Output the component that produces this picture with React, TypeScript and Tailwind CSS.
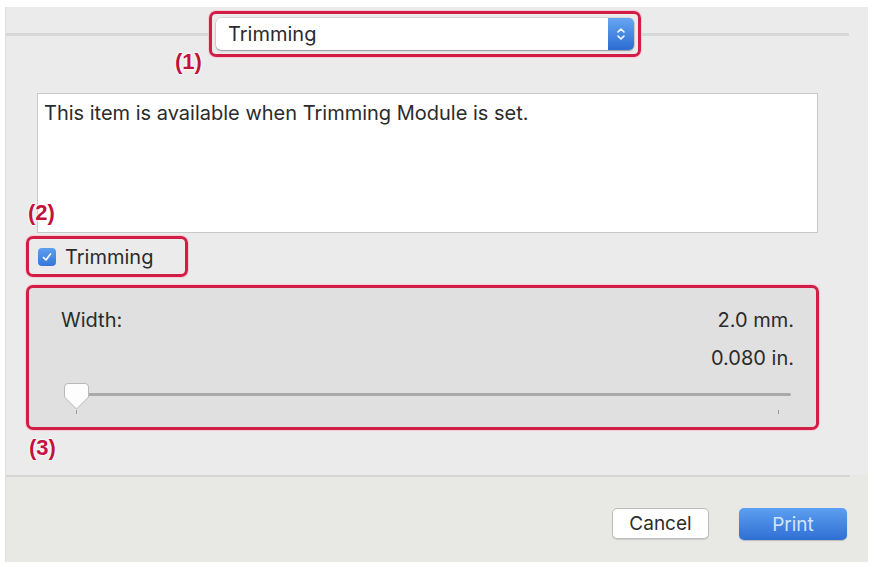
import React from "react";

const redFrame = "rounded-[7px] border-[3px] border-[#d21d47] shadow-[0_0_0_1px_rgba(255,190,205,0.7)]";
const tag =
  "absolute font-['Liberation_Sans',sans-serif] text-[22px] leading-[22px] font-bold text-[#c4113d] [text-shadow:0_0_2px_#fff,0_0_2px_#fff,0_0_3px_#fff]";

function Stepper() {
  return (
    <div className="flex h-full w-[26px] items-center justify-center rounded-r-[5px] bg-gradient-to-b from-[#66a6f2] to-[#2c6cd2]">
      <svg width="10" height="18" viewBox="0 0 10 18" fill="none">
        <path d="M2 7 L5 4 L8 7" stroke="white" strokeWidth="1.6" strokeLinecap="round" strokeLinejoin="round" />
        <path d="M2 11 L5 14 L8 11" stroke="white" strokeWidth="1.6" strokeLinecap="round" strokeLinejoin="round" />
      </svg>
    </div>
  );
}

function Thumb() {
  return (
    <svg width="27" height="30" viewBox="0 0 27 30" className="absolute left-[2px] top-0">
      <path
        d="M5 1.5 H22 a3.5 3.5 0 0 1 3.5 3.5 V15 L13.5 27 L1.5 15 V5 a3.5 3.5 0 0 1 3.5 -3.5 Z"
        fill="#fdfdfd"
        stroke="#b9b9b9"
        strokeWidth="1"
      />
    </svg>
  );
}

export default function App() {
  return (
    <div className="h-[567px] w-[876px] bg-white pb-[5px] pl-[5px] pr-[8px] pt-[7px] font-['Inter',sans-serif] text-[#2b2b2b]">
      <div className="relative flex h-full flex-col border-l border-[#dedede] bg-[#ebebeb]">
        {/* header with popup */}
        <div className="flex items-center pt-[4px]">
          <div className="h-[3px] w-[203px] bg-[#d8d8d8]" />
          <div className={`${redFrame} px-[4px] py-[4px]`}>
            <div className="flex h-[32px] w-[418px] items-stretch rounded-[5px] bg-white shadow-[0_1px_1.5px_rgba(0,0,0,0.3),0_0_0_0.5px_rgba(0,0,0,0.15)]">
              <div className="flex flex-1 items-center pl-[12px] text-[20px] leading-none">Trimming</div>
              <Stepper />
            </div>
          </div>
          <div className="h-[3px] w-[208px] bg-[#d8d8d8]" />
        </div>
        <span className={`${tag} left-[169px] top-[44px]`}>(1)</span>

        {/* description box */}
        <div className="ml-[31px] mt-[36px] h-[140px] w-[781px] border border-[#c8c8c8] bg-white px-[6px] pt-[7px] text-[20px] leading-[24px]">
          This item is available when Trimming Module is set.
        </div>
        <span className={`${tag} left-[22px] top-[195px]`}>(2)</span>

        {/* checkbox */}
        <div className={`${redFrame} ml-[20px] mt-[3px] flex h-[41px] w-[162px] items-center gap-[9px] pl-[9px]`}>
          <div className="flex h-[18px] w-[18px] items-center justify-center rounded-[4px] bg-gradient-to-b from-[#5c9ef0] to-[#3676d8]">
            <svg width="12" height="12" viewBox="0 0 12 12" fill="none">
              <path d="M2.5 6.5 L5 9 L9.5 3" stroke="white" strokeWidth="1.7" strokeLinecap="round" strokeLinejoin="round" />
            </svg>
          </div>
          <span className="text-[20px] leading-none">Trimming</span>
        </div>

        {/* width slider */}
        <div className={`${redFrame} ml-[20px] mt-[8px] h-[145px] w-[793px] bg-[#e0e0e0] pl-[32px] pr-[22px] pt-[20px]`}>
          <div className="flex justify-between text-[20px] leading-[24px]">
            <span>Width:</span>
            <span>2.0 mm.</span>
          </div>
          <div className="mt-[14px] text-right text-[20px] leading-[24px]">0.080 in.</div>
          <div className="relative mt-[12px] h-[36px] pl-[10px] pr-[3px] pt-[11px]">
            <div className="h-[3px] rounded-full bg-[#a9a9a9]" />
            <div className="absolute left-[15px] top-[28px] h-[4px] w-px bg-[#9a9a9a]" />
            <div className="absolute right-[15px] top-[28px] h-[4px] w-px bg-[#9a9a9a]" />
            <Thumb />
          </div>
        </div>
        <span className={`${tag} left-[23px] top-[430px]`}>(3)</span>

        {/* footer */}
        <div className="mt-[45px] flex flex-1 flex-col bg-[#e8e8e5]">
          <div className="mr-[18px] h-[2px] bg-[#d6d6d4]" />
          <div className="flex justify-end gap-[30px] pr-[21px] pt-[31px]">
            <button className="h-[31px] w-[97px] rounded-[5px] border border-[#bdbdbd] bg-white text-[19px] leading-none text-[#2e2e2e] shadow-[0_1px_1px_rgba(0,0,0,0.12)]">
              Cancel
            </button>
            <button className="h-[32px] w-[108px] rounded-[5px] bg-gradient-to-b from-[#5d9ff0] to-[#2f6fd4] text-[19px] leading-none text-[#d4e5fb] shadow-[0_1px_1px_rgba(0,0,0,0.2)]">
              Print
            </button>
          </div>
        </div>
      </div>
    </div>
  );
}
